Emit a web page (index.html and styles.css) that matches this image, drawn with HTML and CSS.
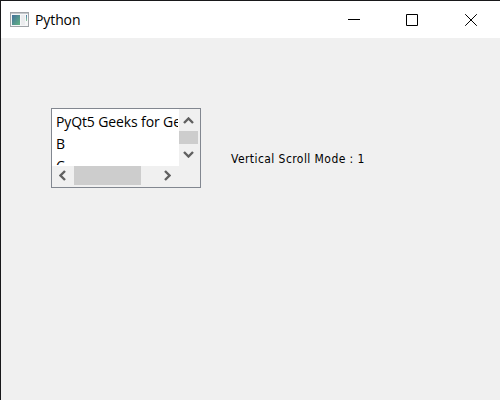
FILE: index.html
```html
<!DOCTYPE html>
<html lang="en">
<head>
<meta charset="utf-8">
<title>Python</title>
<link rel="stylesheet" href="styles.css">
</head>
<body>
<div class="window">
  <header class="titlebar">
    <svg class="app-icon" width="19" height="16" viewBox="0 0 19 16">
      <defs>
        <linearGradient id="g" x1="0" y1="0" x2="1" y2="1"><stop offset="0" stop-color="#44709c"/><stop offset="1" stop-color="#62b483"/></linearGradient>
        <linearGradient id="s" x1="0" y1="0" x2="0" y2="1"><stop offset="0" stop-color="#4a7aa8"/><stop offset="1" stop-color="#8fcf9c"/></linearGradient>
      </defs>
      <rect x=".5" y=".5" width="18" height="14" fill="#f6f7f8" stroke="#a0a4a8"/>
      <rect x="1" y="1" width="17" height="1" fill="#c4c8cc"/>
      <rect x="2" y="3" width="8" height="10" fill="url(#g)"/>
      <rect x="11" y="3" width="4" height="10" fill="#ebecee"/>
      <rect x="16" y="3" width="1" height="6" fill="url(#s)"/>
    </svg>
    <span class="title">Python</span>
    <div class="controls">
      <svg class="control" viewBox="0 0 12 12"><path d="M0 5.5H12"/></svg>
      <svg class="control" viewBox="0 0 12 12"><path d="M.5 .5H11.5V11.5H.5Z"/></svg>
      <svg class="control" viewBox="0 0 12 12"><path d="M.2 .2L11.8 11.8M11.8 .2L.2 11.8"/></svg>
    </div>
  </header>
  <main class="content">
    <div class="list">
      <ul class="items">
        <li class="item">PyQt5 Geeks for Geeks</li>
        <li class="item">B</li>
        <li class="item">C</li>
      </ul>
      <div class="scroll-v">
        <svg class="arrow" viewBox="0 0 11 7"><path d="M1 6L5.5 1.5L10 6"/></svg>
        <div class="thumb-v"></div>
        <svg class="arrow" viewBox="0 0 11 7"><path d="M1 1L5.5 5.5L10 1"/></svg>
      </div>
      <div class="scroll-h">
        <svg class="arrow-h" viewBox="0 0 7 11"><path d="M6 1L1.5 5.5L6 10"/></svg>
        <div class="thumb-h"></div>
        <svg class="arrow-h arrow-right" viewBox="0 0 7 11"><path d="M1 1L5.5 5.5L1 10"/></svg>
      </div>
    </div>
    <p class="label">Vertical Scroll Mode : 1</p>
  </main>
</div>
</body>
</html>
```
FILE: styles.css
```css
* { box-sizing: border-box; }
body { margin: 0; }
.window {
  width: 500px;
  height: 400px;
  overflow: hidden;
  background: #f0f0f0;
  border-top: 1px solid #18181a;
  border-left: 1px solid #18181a;
}
.titlebar {
  display: flex;
  align-items: center;
  height: 37px;
  padding-left: 9px;
  background: #fff;
}
.title {
  margin-left: 6px;
  font: 14px/20px "Open Sans", "Noto Sans", sans-serif;
  letter-spacing: -0.1px;
  color: #000;
}
.controls {
  display: flex;
  gap: 46px;
  margin-left: auto;
  padding-right: 24px;
}
.control:last-child { margin-left: 1px; margin-right: -1px; }
.control {
  width: 12px;
  height: 12px;
  fill: none;
  stroke: #000;
}
.content {
  display: flex;
  align-items: flex-start;
  gap: 30px;
  padding: 70px 0 0 50px;
}
.list {
  display: grid;
  grid-template: 57px 19px / 127px 19px;
  width: 150px;
  height: 80px;
  border: 1px solid #828790;
  background: #f0f0f0;
}
.items {
  margin: 0;
  padding: 2px 0 0 4px;
  overflow: hidden;
  list-style: none;
  background: #fff;
  border: solid #fff;
  border-width: 0 1px 1px 0;
  white-space: nowrap;
}
.item {
  height: 22px;
  font: 14px/22px "Open Sans", "Noto Sans", sans-serif;
  letter-spacing: -0.12px;
}
.scroll-v {
  display: flex;
  flex-direction: column;
  align-items: center;
  justify-content: space-between;
  padding: 8px 0;
}
.thumb-v { width: 19px; height: 13px; background: #cdcdcd; }
.scroll-h {
  display: flex;
  align-items: center;
  padding-left: 7px;
}
.thumb-h { width: 67px; height: 19px; margin-left: 8px; background: #cdcdcd; }
.arrow, .arrow-h { flex: none; fill: none; stroke: #606060; stroke-width: 2.4; }
.arrow { width: 11px; height: 7px; }
.arrow-h { width: 7px; height: 11px; }
.arrow-right { margin-left: 23px; }
.label {
  margin: 42px 0 0;
  font: 12px/18px "DejaVu Sans Condensed", "DejaVu Sans", sans-serif;
  letter-spacing: 0.43px;
  color: #000;
}
```
